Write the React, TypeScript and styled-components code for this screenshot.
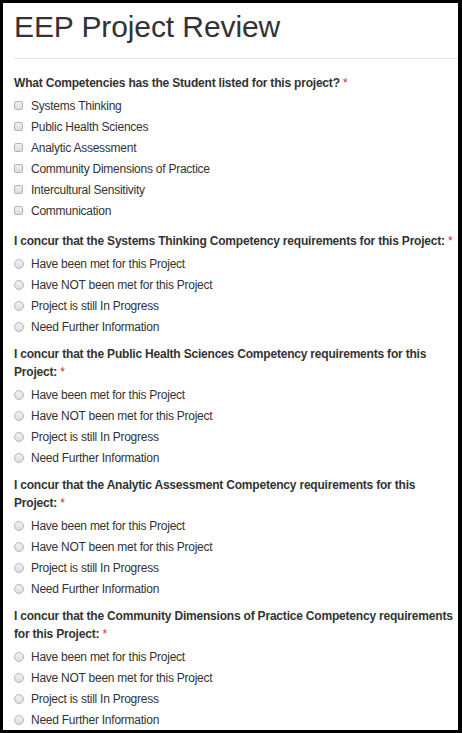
import { FC } from "react";
import styled, { createGlobalStyle } from "styled-components";

const GlobalStyle = createGlobalStyle`
  html, body {
    margin: 0;
    padding: 0;
    background: #000;
  }
  body {
    font-family: "Liberation Sans", Arial, sans-serif;
    color: #333;
  }
`;

const Frame = styled.div`
  box-sizing: border-box;
  width: 462px;
  height: 733px;
  overflow: hidden;
  background: #fff;
  border-style: solid;
  border-color: #000;
  border-width: 3px 4px 3px 3px;
  padding-left: 11px;
`;

const Title = styled.h1`
  margin: 7px 0 0 0;
  font-size: 30px;
  line-height: 33px;
  font-weight: 400;
  letter-spacing: -0.1px;
  color: #333;
`;

const Rule = styled.hr`
  margin: 15px 0 0 0;
  border: 0;
  border-top: 1px solid #e6e6e6;
`;

const Form = styled.div`
  padding-top: 15px;
`;

const Section = styled.div<{ $gap: number }>`
  margin-bottom: ${(p) => p.$gap}px;
`;

const Question = styled.div`
  font-size: 12px;
  line-height: 18px;
  font-weight: 700;
  letter-spacing: -0.2px;
  color: #333;
  margin-bottom: 3px;
`;

const Required = styled.span`
  color: #c9302c;
  font-weight: 400;
`;

const Option = styled.label`
  display: flex;
  align-items: center;
  height: 21px;
  font-size: 12px;
  letter-spacing: -0.25px;
  color: #333;
`;

const Box = styled.span`
  box-sizing: border-box;
  width: 9px;
  height: 9px;
  margin: 0 8px 0 0;
  border: 1px solid #b4b4b4;
  border-radius: 2px;
  background: linear-gradient(#f0f0f0, #dcdcdc);
  flex: none;
`;

const Radio = styled.span`
  box-sizing: border-box;
  width: 10px;
  height: 10px;
  margin: 0 7px 0 0;
  border: 1px solid #b4b4b4;
  border-radius: 50%;
  background: linear-gradient(#f2f2f2, #dedede);
  flex: none;
`;

const competencies = [
  "Systems Thinking",
  "Public Health Sciences",
  "Analytic Assessment",
  "Community Dimensions of Practice",
  "Intercultural Sensitivity",
  "Communication",
];

const answers = [
  "Have been met for this Project",
  "Have NOT been met for this Project",
  "Project is still In Progress",
  "Need Further Information",
];

const concurList = [
  "Systems Thinking",
  "Public Health Sciences",
  "Analytic Assessment",
  "Community Dimensions of Practice",
];

const App: FC = () => {
  return (
    <>
      <GlobalStyle />
      <Frame>
        <Title>EEP Project Review</Title>
        <Rule />
        <Form>
          <Section $gap={11}>
            <Question>
              What Competencies has the Student listed for this project? <Required>*</Required>
            </Question>
            {competencies.map((c) => (
              <Option key={c}>
                <Box />
                {c}
              </Option>
            ))}
          </Section>
          {concurList.map((c) => (
            <Section $gap={8} key={c}>
              <Question>
                I concur that the {c} Competency requirements for this Project: <Required>*</Required>
              </Question>
              {answers.map((a) => (
                <Option key={a}>
                  <Radio />
                  {a}
                </Option>
              ))}
            </Section>
          ))}
        </Form>
      </Frame>
    </>
  );
};

export default App;
